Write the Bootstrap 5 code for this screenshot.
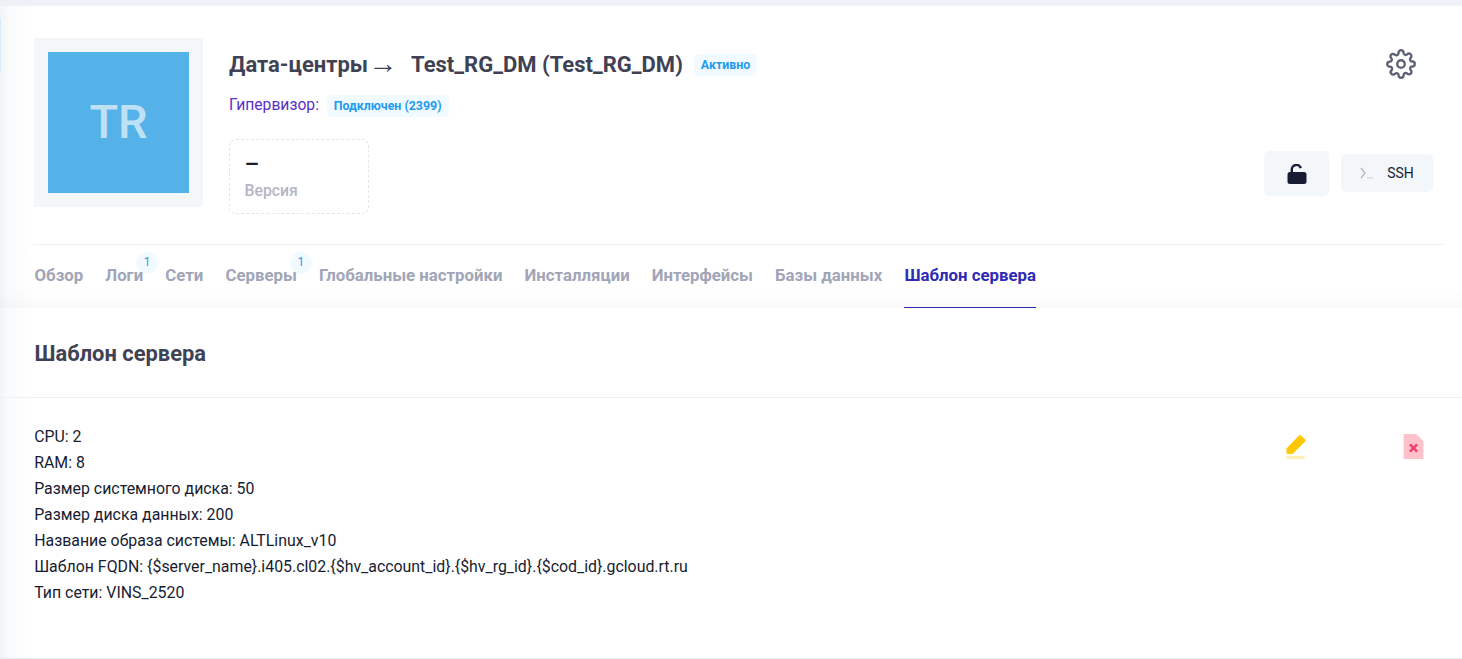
<!doctype html>
<html lang="ru"><head><meta charset="utf-8"><title>Шаблон сервера</title>
<link href="https://cdn.jsdelivr.net/npm/bootstrap@5.3.0/dist/css/bootstrap.min.css" rel="stylesheet">
<style>
html,body{height:659px;overflow:hidden}
body{font-family:Roboto,"Liberation Sans",sans-serif;background:#fff;color:#181c32;font-size:15px}
.top-strip{height:6px;background:#eef1f5}
.page-panel{height:653px;border-bottom:1px solid #e8ebf0;background:linear-gradient(90deg,#f3f4f6 0,#f9fafb 8px,#fff 34px);position:relative}
.side-mark{position:absolute;left:0;top:12px;width:1px;height:55px;background:#d5ecfb}
.head-area{padding:32px 18px 0 33px}
.head-top{height:207px;border-bottom:1px solid #eff2f5}
.avatar-frame{width:169px;height:169px;background:#f4f7fa;padding:14px;margin-left:1px}
.avatar-box{height:141px;background:#55b2e8;color:#bfe1f6;font-size:47px;font-weight:500}
.info-col{padding-left:26px}
.crumb{font-size:22px;font-weight:700;color:#3f4254;line-height:26px;height:26px;margin-top:14px}
.crumb-arrow{font-family:"Liberation Sans",sans-serif;font-size:29px;line-height:0;font-weight:400;margin:0 8px 0 .5px;vertical-align:-1px}
.tag-blue{background:#f1faff;color:#1f9bf0;font-size:12.4px;font-weight:700;border-radius:5px;padding:0 7px;line-height:22px;display:inline-block}
.tag-a{margin-left:11px;vertical-align:3px}
.hv-row{margin-top:16px;line-height:22px;height:22px}
.hv-label{color:#5b30c8;font-size:15.7px}
.tag-b{margin-left:4px;padding:0 7px 0 7px}
.stat-box{width:140px;height:75px;border:1px dashed #e4e6ef;border-radius:7px;margin-top:23px;padding:14px 14.5px}
.stat-val{font-size:23px;font-weight:500;color:#181c32;line-height:22px}
.stat-lab{font-size:15.8px;font-weight:500;color:#b5b5c3;line-height:20px;margin-top:5px}
.act-col{padding-right:11px;padding-top:11px}
.gear{width:30px;height:30px;margin-right:17px}
.act-row{margin-top:72px;gap:12px}
.act-lock{width:65px;height:45px;background:#f4f7fa;border:0;border-radius:5px}
.act-ssh{width:92px;height:38px;background:#f4f7fa;border:0;border-radius:5px;font-size:14px;color:#181c32;padding:0;margin-top:3px;gap:13px}
.tab-bar{height:63px;padding:0 0 0 34.5px;background:linear-gradient(180deg,transparent 70%,rgba(0,0,0,.018) 100%)}
.tab-item{font-size:16.8px;font-weight:700;color:#a1a5b7;text-decoration:none;margin-right:22.12px;height:63px;line-height:61px;position:relative;z-index:0;display:block}
.tab-item.on{color:#2e2ab5;border-bottom:1px solid #2e2ab5}
.tab-count{position:absolute;z-index:-1;top:7px;right:-15px;width:22px;height:22px;border-radius:50%;background:#f1faff;color:#1f9bf0;font-size:12px;font-weight:400;line-height:20px;text-align:center}
.sec-head{height:90px;border-bottom:1px solid #eff2f5;padding-left:34.5px}
.sec-title{font-size:21.9px;font-weight:700;color:#3f4254;margin:0;line-height:24px;padding-top:34px}
.sec-body{padding:26px 36px 0 34.2px}
.spec-line{line-height:26px;font-size:15.89px;color:#181c32;margin:0}
.tool-icons{padding-top:10px;gap:92px}
.tool-a,.tool-b{width:25px;height:25px}
</style></head><body>
<div class="top-strip"></div>
<main class="page-panel">
<span class="side-mark"></span>
<section class="head-area">
 <div class="head-top d-flex">
  <div class="avatar-frame flex-shrink-0"><div class="avatar-box d-flex align-items-center justify-content-center">TR</div></div>
  <div class="info-col flex-grow-1">
   <div class="crumb">Дата-центры<span class="crumb-arrow">→</span> Test_RG_DM (Test_RG_DM)<span class="tag-blue tag-a">Активно</span></div>
   <div class="hv-row"><span class="hv-label">Гипервизор:</span> <span class="tag-blue tag-b">Подключен (2399)</span></div>
   <div class="stat-box"><div class="stat-val">–</div><div class="stat-lab">Версия</div></div>
  </div>
  <div class="act-col d-flex flex-column align-items-end">
   <svg class="gear" viewBox="0 0 24 24" fill="none" stroke="#5e6278" stroke-width="1.9" stroke-linejoin="round"><circle cx="12" cy="12" r="3"/><path d="M19.4 15a1.65 1.65 0 0 0 .33 1.82l.06.06a2 2 0 1 1-2.83 2.83l-.06-.06a1.65 1.65 0 0 0-2.82 1.17V21a2 2 0 1 1-4 0v-.09a1.65 1.65 0 0 0-2.82-1.11l-.06.06a2 2 0 1 1-2.83-2.83l.06-.06a1.65 1.65 0 0 0-1.17-2.82H3a2 2 0 1 1 0-4h.09A1.65 1.65 0 0 0 4.2 7.33l-.06-.06a2 2 0 1 1 2.83-2.83l.06.06a1.65 1.65 0 0 0 1.82.33H9a1.65 1.65 0 0 0 1-1.51V3a2 2 0 1 1 4 0v.09a1.65 1.65 0 0 0 2.82 1.17l.06-.06a2 2 0 1 1 2.83 2.83l-.06.06a1.65 1.65 0 0 0-.33 1.82V9a1.65 1.65 0 0 0 1.51 1H21a2 2 0 1 1 0 4h-.09a1.65 1.65 0 0 0-1.51 1z"/></svg>
   <div class="act-row d-flex align-items-start">
    <button class="act-lock d-flex align-items-center justify-content-center" aria-label="lock"><svg width="20" height="20" viewBox="0 0 20 20"><rect x="0.500" y="8" width="19" height="12" rx="2.500" fill="#181c32"/><path d="M4.800 9V5.800a4.600 4.600 0 0 1 9-1.600" fill="none" stroke="#181c32" stroke-width="2.400"/></svg></button>
    <button class="act-ssh d-flex align-items-center justify-content-center"><svg width="14" height="12" viewBox="0 0 14 12" fill="none"><path d="M1 1l4 5-4 5" stroke="#b5b5c3" stroke-width="1.3"/><rect x="7" y="10" width="6" height="1.600" fill="#dcdde3"/></svg><span>SSH</span></button>
   </div>
  </div>
 </div>
</section>
<nav class="tab-bar d-flex">
 <a class="tab-item" href="#">Обзор</a>
 <a class="tab-item" href="#">Логи<span class="tab-count">1</span></a>
 <a class="tab-item" href="#">Сети</a>
 <a class="tab-item" href="#">Серверы<span class="tab-count">1</span></a>
 <a class="tab-item" href="#">Глобальные настройки</a>
 <a class="tab-item" href="#">Инсталляции</a>
 <a class="tab-item" href="#">Интерфейсы</a>
 <a class="tab-item" href="#">Базы данных</a>
 <a class="tab-item on" href="#">Шаблон сервера</a>
</nav>
<section class="sec-head"><h2 class="sec-title">Шаблон сервера</h2></section>
<section class="sec-body d-flex justify-content-between">
 <div>
  <p class="spec-line">CPU: 2</p>
  <p class="spec-line">RAM: 8</p>
  <p class="spec-line">Размер системного диска: 50</p>
  <p class="spec-line">Размер диска данных: 200</p>
  <p class="spec-line">Название образа системы: ALTLinux_v10</p>
  <p class="spec-line">Шаблон FQDN: {$server_name}.i405.cl02.{$hv_account_id}.{$hv_rg_id}.{$cod_id}.gcloud.rt.ru</p>
  <p class="spec-line">Тип сети: VINS_2520</p>
 </div>
 <div class="tool-icons d-flex align-items-start">
  <svg class="tool-a" viewBox="0 0 25 25"><path d="M2.500 14.500L15 1.500a1.500 1.500 0 0 1 2.100 0l4 4a1.500 1.500 0 0 1 0 2.100L8.500 20H4a1.500 1.500 0 0 1-1.500-1.500z" fill="#ffc700"/><rect x="2.500" y="22" width="18" height="3" fill="#fff0b3"/></svg>
  <svg class="tool-b" viewBox="0 0 24 24"><path d="M2.500 0h12l7 7v17h-19z" fill="#ffc2cb"/><path d="M8.500 10l7 7m0-7l-7 7" stroke="#f1416c" stroke-width="2.400"/></svg>
 </div>
</section>
</main>
<script src="https://cdn.jsdelivr.net/npm/bootstrap@5.3.0/dist/js/bootstrap.bundle.min.js"></script>
</body></html>
